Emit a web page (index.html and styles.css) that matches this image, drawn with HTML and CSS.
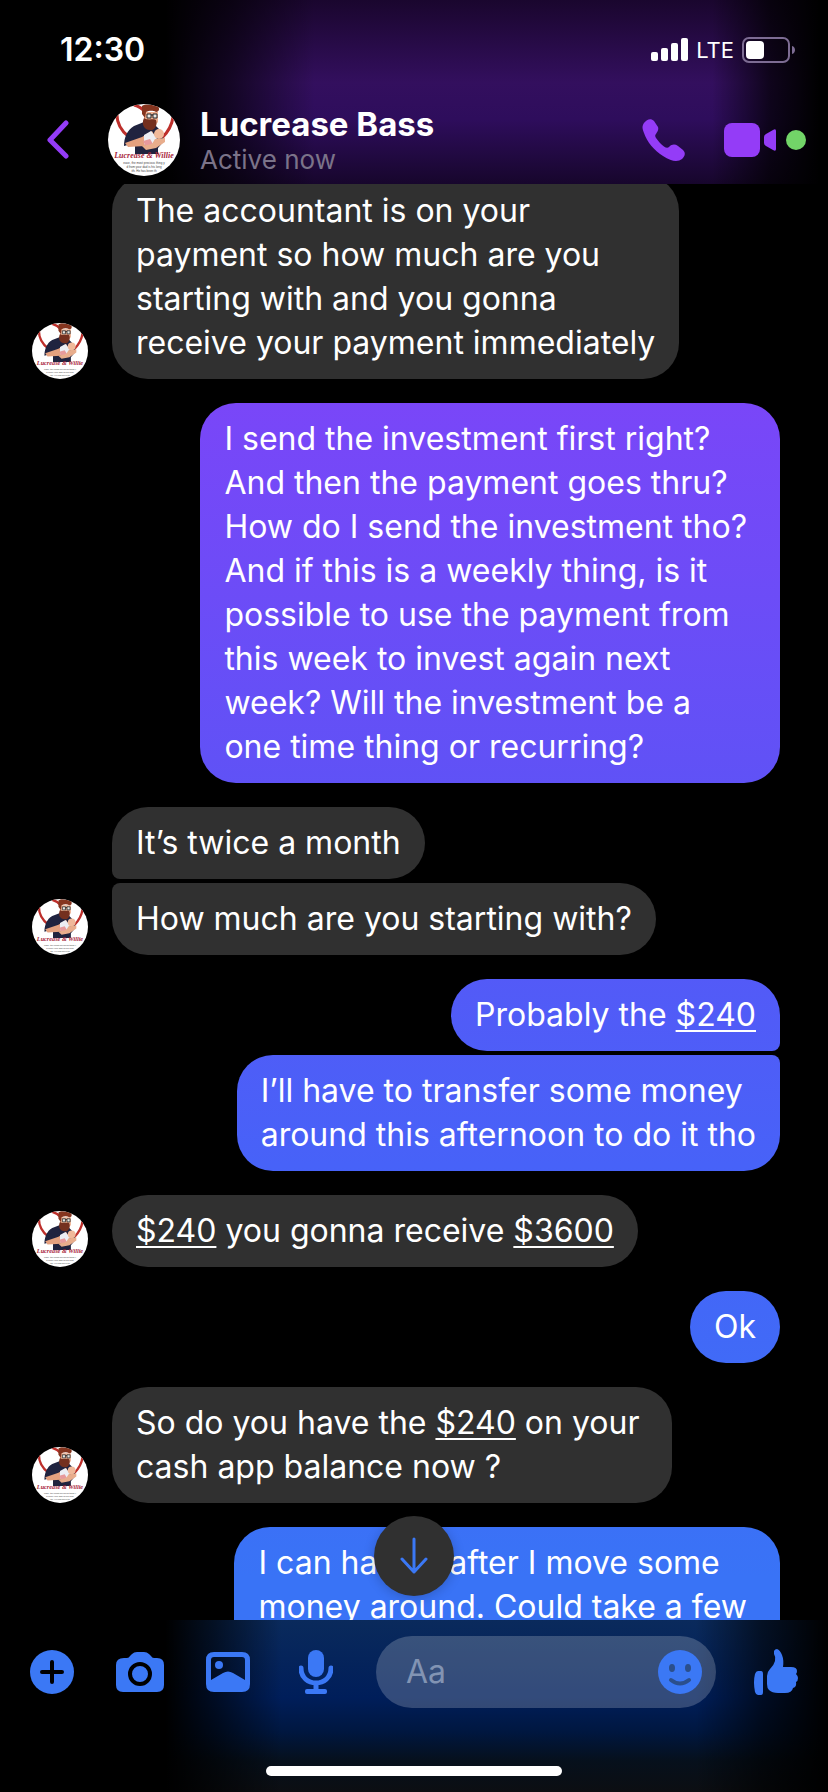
FILE: index.html
```html
<!DOCTYPE html>
<html lang="en">
<head>
    <meta charset="UTF-8">
    <meta name="viewport" content="width=device-width, initial-scale=1.0">
    <title>Lucrease Bass</title>
    <link rel="stylesheet" href="styles.css">
</head>
<body>
    <!-- Shared profile picture -->
    <svg class="defs" aria-hidden="true">
        <symbol id="profile" viewBox="0 0 72 72">
            <rect width="72" height="72" fill="#fff"/>
            <path d="M26 1C30 2 34 4 37 8M9 7C8 18 12 26 21 33M65 13C64 21 60 28 54 34" fill="none" stroke="#bd2f2b" stroke-width="3"/>
            <path d="M26 22L36 18L47 21L53 27L56 37L50 44V50H27V39L16 42C16 34 19 26 26 22Z" fill="#20233f"/>
            <path d="M36 8H50V18C48 22 38 22 36 17Z" fill="#eeb090"/>
            <path d="M34 2C38 -1 44 1 50 2C52 5 51 8 48 8C44 6 41 7 38 8L37 14L34 10Z" fill="#85351f"/>
            <path d="M36 14C40 17 46 14 48 16C50 22 46 27 42 26C36 26 33 20 36 14Z" fill="#74301f"/>
            <path d="M39 10H43V14H39ZM45 10H49V14H45ZM43 11H45" fill="#e9e9e4" stroke="#25272b"/>
            <path d="M17 39L34 33L44 27L48 34L37 42L20 43Z" fill="#e4a17f"/>
            <path d="M36 31L43 27L49 34L44 44L36 40Z" fill="#eceef4"/>
            <path d="M35 37L42 35L45 40L38 43Z" fill="#e79a9c"/>
            <circle cx="51" cy="30" r="5" fill="#f0b99a"/>
            <path d="M47 35L57 34L57 38L48 44L38 46L34 42L44 40Z" fill="#e8ad8c"/>
            <text x="36" y="54" text-anchor="middle" font-family="Liberation Serif, serif" font-size="8" font-style="italic" font-weight="700" fill="#a8253a">Lucrease &amp; Willie</text>
            <g font-family="Liberation Sans, sans-serif" font-size="3" fill="#444" text-anchor="middle">
                <text x="36" y="60">ease, the most precious thing y</text>
                <text x="36" y="64">d from your dad is his long</text>
                <text x="36" y="68">ith. He has been th</text>
            </g>
        </symbol>
    </svg>

    <header class="header">
        <div class="status-bar">
            <span class="time">12:30</span>
            <div class="status-right">
                <svg width="37" height="24" viewBox="0 0 37 24" fill="#fff" aria-hidden="true">
                    <rect x="0" y="14" width="7" height="9" rx="2"/>
                    <rect x="10" y="10" width="7" height="13" rx="2"/>
                    <rect x="20" y="5" width="7" height="18" rx="2"/>
                    <rect x="30" y="0" width="7" height="23" rx="2"/>
                </svg>
                <span class="network">LTE</span>
                <svg width="54" height="26" viewBox="0 0 54 26" aria-hidden="true">
                    <rect x="1" y="1" width="46" height="24" rx="6" fill="none" stroke="#7d6c93" stroke-width="2"/>
                    <rect x="4" y="4" width="18" height="18" rx="4" fill="#fff"/>
                    <path d="M50 9C54 10 54 16 50 17Z" fill="#7d6c93"/>
                </svg>
            </div>
        </div>
        <nav class="nav">
            <button class="icon-button back" aria-label="Back">
                <svg width="22" height="40" viewBox="0 0 22 40" fill="none" stroke="#943cf7" stroke-width="5" stroke-linecap="round" stroke-linejoin="round">
                    <path d="M19 3L3 20L19 36"/>
                </svg>
            </button>
            <svg class="avatar avatar-large" role="img" aria-label="Lucrease Bass"><use href="#profile"/></svg>
            <div class="contact">
                <h1>Lucrease Bass</h1>
                <p>Active now</p>
            </div>
            <button class="icon-button call" aria-label="Audio call">
                <svg width="44" height="44" viewBox="0 0 44 44" fill="#943cf7">
                    <path d="M2 5C5 1 9 0 12 3L16 9C17 12 15 14 14 16C12 18 14 20 18 25C22 29 25 31 27 29C30 26 33 26 36 28L41 32C44 35 43 38 40 41C36 44 30 44 21 38C12 32 5 24 2 15C0 10 0 8 2 5Z"/>
                </svg>
            </button>
            <button class="icon-button video" aria-label="Video call">
                <svg width="52" height="34" viewBox="0 0 52 34" fill="#943cf7">
                    <rect width="36" height="34" rx="8"/>
                    <path d="M40 14Q40 12 42 11L49 7Q52 5 52 8V26Q52 29 49 27L42 23Q40 22 40 20Z"/>
                </svg>
            </button>
            <span class="online-dot"></span>
        </nav>
    </header>

    <main class="chat">
        <div class="group incoming">
            <svg class="avatar" aria-hidden="true"><use href="#profile"/></svg>
            <div class="bubbles">
                <p class="bubble">The accountant is on your<br>payment so how much are you<br>starting with and you gonna<br>receive your payment immediately</p>
            </div>
        </div>
        <div class="group outgoing">
            <div class="bubbles">
                <p class="bubble">I send the investment first right?<br>And then the payment goes thru?<br>How do I send the investment tho?&nbsp;<br>And if this is a weekly thing, is it<br>possible to use the payment from<br>this week to invest again next<br>week? Will the investment be a<br>one time thing or recurring?</p>
            </div>
        </div>
        <div class="group incoming">
            <svg class="avatar" aria-hidden="true"><use href="#profile"/></svg>
            <div class="bubbles">
                <p class="bubble">It’s twice a month</p>
                <p class="bubble">How much are you starting with?</p>
            </div>
        </div>
        <div class="group outgoing">
            <div class="bubbles">
                <p class="bubble">Probably the <a href="#">$240</a></p>
                <p class="bubble">I’ll have to transfer some money<br>around this afternoon to do it tho</p>
            </div>
        </div>
        <div class="group incoming">
            <svg class="avatar" aria-hidden="true"><use href="#profile"/></svg>
            <div class="bubbles">
                <p class="bubble"><a href="#">$240</a> you gonna receive <a href="#">$3600</a></p>
            </div>
        </div>
        <div class="group outgoing">
            <div class="bubbles">
                <p class="bubble">Ok</p>
            </div>
        </div>
        <div class="group incoming">
            <svg class="avatar" aria-hidden="true"><use href="#profile"/></svg>
            <div class="bubbles">
                <p class="bubble">So do you have the <a href="#">$240</a> on your&nbsp;<br>cash app balance now ?</p>
            </div>
        </div>
        <div class="group outgoing">
            <div class="bubbles">
                <p class="bubble bubble-last">I can have it after I move some<br>money around. Could take a few&nbsp;</p>
            </div>
        </div>
    </main>

    <footer class="footer">
        <button class="scroll-down" aria-label="Scroll to latest">
            <svg width="28" height="38" viewBox="0 0 28 38" fill="none" stroke="#3b78f5" stroke-width="3" stroke-linecap="round" stroke-linejoin="round">
                <path d="M14 2V35M2 22L14 35L26 22"/>
            </svg>
        </button>
        <form class="composer">
            <div class="tools">
                <button type="button" class="icon-button" aria-label="More">
                    <svg width="44" height="44" viewBox="0 0 44 44">
                        <circle cx="22" cy="22" r="22" fill="#3b78f5"/>
                        <path d="M22 12V32M12 22H32" stroke="#000" stroke-width="4" stroke-linecap="round"/>
                    </svg>
                </button>
                <button type="button" class="icon-button" aria-label="Camera">
                    <svg width="48" height="40" viewBox="0 0 48 40">
                        <path d="M8 6H11Q13 6 14 4L16 2Q18 0 21 0H28Q31 0 33 2L35 4Q36 6 38 6H41Q48 6 48 13V33Q48 40 41 40H7Q0 40 0 33V13Q0 6 8 6Z" fill="#3b78f5"/>
                        <circle cx="24" cy="22" r="10" fill="none" stroke="#000" stroke-width="4"/>
                    </svg>
                </button>
                <button type="button" class="icon-button" aria-label="Photos">
                    <svg width="44" height="40" viewBox="0 0 44 40" fill="#3b78f5">
                        <path fill-rule="evenodd" d="M8 0H36Q44 0 44 8V32Q44 40 36 40H8Q0 40 0 32V8Q0 0 8 0ZM8 5Q5 5 5 8V28L17 21Q22 18 27 21L39 28V8Q39 5 36 5Z"/>
                        <circle cx="13" cy="13" r="4"/>
                    </svg>
                </button>
                <button type="button" class="icon-button" aria-label="Voice message">
                    <svg width="34" height="44" viewBox="0 0 34 44" fill="#3b78f5">
                        <rect x="9" width="16" height="27" rx="8"/>
                        <path d="M2 18C2 38 32 38 32 18M17 33V40" fill="none" stroke="#3b78f5" stroke-width="5" stroke-linecap="round"/>
                        <rect x="6" y="39" width="22" height="5" rx="2"/>
                    </svg>
                </button>
            </div>
            <div class="input-wrap">
                <input type="text" placeholder="Aa" aria-label="Message">
                <button type="button" class="icon-button" aria-label="Emoji">
                    <svg width="44" height="44" viewBox="0 0 44 44">
                        <circle cx="22" cy="22" r="22" fill="#3b78f5"/>
                        <ellipse cx="14" cy="18" rx="3" ry="4" fill="#2b4f8c"/>
                        <ellipse cx="30" cy="18" rx="3" ry="4" fill="#2b4f8c"/>
                        <path d="M13 30Q22 37 31 30" fill="none" stroke="#2b4f8c" stroke-width="4" stroke-linecap="round"/>
                    </svg>
                </button>
            </div>
            <button type="button" class="icon-button" aria-label="Like">
                <svg width="44" height="46" viewBox="0 0 44 46" fill="#3b78f5">
                    <path d="M4 22H7Q9 22 9 25V43Q9 46 7 46H4Q2 46 1 43Q-1 33 1 25Q2 22 4 22Z"/>
                    <path d="M20 2Q21 0 23 0Q26 1 28 6Q30 11 29 18H37Q43 18 43 22Q43 24 42 25Q44 27 44 29Q44 32 42 33Q43 38 39 39Q38 44 31 44H24Q18 44 15 41Q13 39 13 35V27Q13 23 16 20Q20 16 21 12Q22 8 20 5Z"/>
                </svg>
            </button>
        </form>
        <div class="home-indicator"></div>
    </footer>
</body>
</html>
```
FILE: styles.css
```css
* {
    box-sizing: border-box;
}
body {
    margin: 0;
    min-height: 100vh;
    background-color: #000;
    color: #fff;
    font-family: Inter, "Liberation Sans", sans-serif;
    font-size: 32px;
    line-height: 44px;
}
h1, p {
    margin: 0;
}
.defs {
    position: absolute;
    width: 0;
    height: 0;
}
.icon-button {
    display: flex;
    align-items: center;
    justify-content: center;
    width: 48px;
    height: 48px;
    padding: 0;
    border: none;
    background: none;
    cursor: pointer;
}
.avatar {
    flex: none;
    width: 56px;
    height: 56px;
    border-radius: 50%;
}
.avatar-large {
    width: 72px;
    height: 72px;
}

/* Header */
.header {
    position: fixed;
    top: 0;
    left: 0;
    right: 0;
    z-index: 1;
    background:
        linear-gradient(to right, #000 20%, rgba(0, 0, 0, 0.6) 28%, transparent 38%, transparent 86%, rgba(0, 0, 0, 0.7) 93%, #000 99%),
        linear-gradient(#1a062e, #330f5e 45%, #2e0d5c 65%, #17062c);
}
.status-bar {
    display: flex;
    align-items: center;
    justify-content: space-between;
    height: 100px;
    padding: 0 32px 0 60px;
}
.time {
    font-weight: 600;
}
.status-right {
    display: flex;
    align-items: center;
    gap: 8px;
}
.network {
    font-size: 22px;
}
.nav {
    display: flex;
    align-items: center;
    padding: 4px 22px 8px 34px;
}
.back {
    margin-right: 26px;
}
.contact {
    flex: 1;
    padding-left: 20px;
}
.contact h1 {
    font-size: 33px;
    font-weight: 700;
    line-height: 40px;
}
.contact p {
    color: #7b7389;
    font-size: 26px;
    line-height: 32px;
}
.call {
    margin-right: 36px;
}
.video {
    width: 52px;
}
.online-dot {
    width: 20px;
    height: 20px;
    margin-left: 10px;
    border-radius: 50%;
    background-color: #72d568;
}

/* Messages */
.chat {
    display: flex;
    flex-direction: column;
    gap: 24px;
    padding: 175px 48px 0 32px;
}
.group {
    display: flex;
    align-items: flex-end;
    gap: 24px;
}
.bubbles {
    display: flex;
    flex-direction: column;
    align-items: flex-start;
    gap: 4px;
}
.outgoing {
    justify-content: flex-end;
}
.outgoing .bubbles {
    align-items: flex-end;
}
.bubble {
    padding: 14px 24px;
    border-radius: 36px;
    background-color: #303030;
}
.bubble a {
    color: inherit;
    text-decoration-thickness: 2px;
    text-underline-offset: 4px;
}
.incoming .bubble:not(:first-child) {
    border-top-left-radius: 8px;
}
.incoming .bubble:not(:last-child) {
    border-bottom-left-radius: 8px;
}
/* One gradient runs down the whole screen behind the sent messages */
.outgoing .bubble {
    background: linear-gradient(#943cf7, #7a46f8 22%, #5f52f6 44%, #4762f8 65%, #3973f6 88%) fixed;
}
.outgoing .bubble:not(:first-child) {
    border-top-right-radius: 8px;
}
.outgoing .bubble:not(:last-child) {
    border-bottom-right-radius: 8px;
}
/* Runs on under the footer */
.bubble-last {
    padding-bottom: 58px;
}

/* Footer */
.footer {
    position: fixed;
    bottom: 0;
    left: 0;
    right: 0;
    background:
        linear-gradient(to right, #000 20%, rgba(0, 0, 0, 0.6) 26%, transparent 34%, transparent 84%, rgba(0, 0, 0, 0.6) 92%, #000 100%),
        linear-gradient(#0a2a5c, #001e5a 45%, #001740 65%, #06101c 82%, #0c0e12);
}
.scroll-down {
    position: absolute;
    bottom: 100%;
    left: 50%;
    display: flex;
    align-items: center;
    justify-content: center;
    width: 80px;
    height: 80px;
    margin: 0 0 24px -40px;
    padding: 0;
    border: none;
    border-radius: 50%;
    background-color: #303030;
    box-shadow: 0 2px 12px rgba(0, 0, 0, 0.2);
    cursor: pointer;
}
.composer {
    display: flex;
    align-items: center;
    gap: 36px;
    padding: 16px 28px 58px;
}
.tools {
    display: flex;
    gap: 40px;
}
.input-wrap {
    display: flex;
    flex: 1;
    align-items: center;
    min-width: 0;
    height: 72px;
    padding: 0 12px 0 30px;
    border-radius: 36px;
    background-color: rgba(255, 255, 255, 0.2);
}
.input-wrap input {
    flex: 1;
    min-width: 0;
    padding: 0;
    border: none;
    outline: none;
    background: none;
    color: #fff;
    font: inherit;
}
.input-wrap input::placeholder {
    color: #8294b3;
    opacity: 1;
}
.home-indicator {
    width: 296px;
    height: 10px;
    margin: 0 auto 16px;
    border-radius: 5px;
    background-color: #fff;
}
```
